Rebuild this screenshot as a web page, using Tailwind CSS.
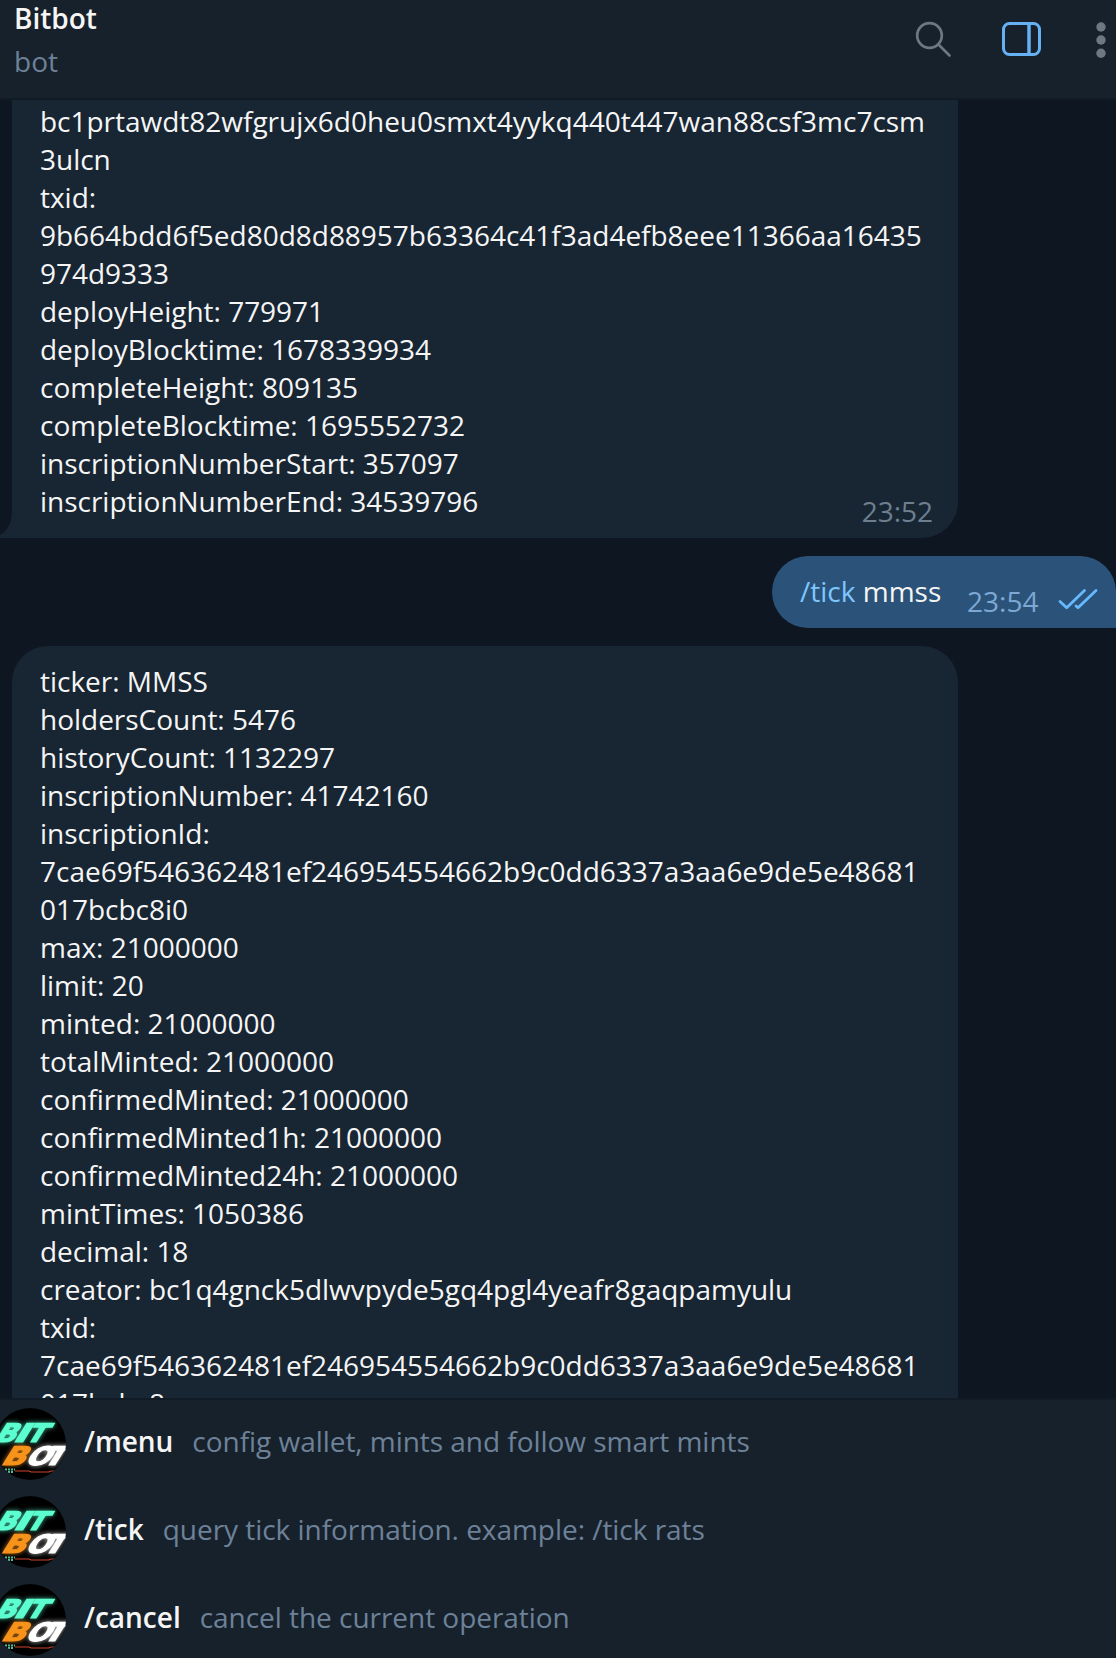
<!DOCTYPE html>
<html lang="en">
<head>
<meta charset="utf-8">
<title>Bitbot</title>
<script src="https://cdn.jsdelivr.net/npm/@tailwindcss/browser@4"></script>
</head>
<body class="h-[1658px] w-[1116px] overflow-hidden bg-[#0e1621] font-['Open_Sans',sans-serif] text-[28px] leading-[38px] text-[#f5f5f5]">
<svg class="hidden">
  <defs>
    <radialGradient id="ember" cx="0.55" cy="0.5" r="0.5"><stop offset="0" stop-color="#7a2412"/><stop offset="1" stop-color="#7a2412" stop-opacity="0"/></radialGradient>
    <filter id="glow" x="-30%" y="-50%" width="160%" height="200%"><feGaussianBlur stdDeviation="2.4" result="b"/><feComponentTransfer in="b" result="c"><feFuncA type="linear" slope="0.7"/></feComponentTransfer><feMerge><feMergeNode in="c"/><feMergeNode in="SourceGraphic"/></feMerge></filter>
  </defs>
  <symbol id="avatar" viewBox="0 0 72 72">
    <rect width="72" height="72" fill="#000"/>
    <ellipse cx="42" cy="64" rx="34" ry="12" fill="url(#ember)"/>
    <g font-family="DejaVu Sans, sans-serif" font-weight="700" font-size="25.500" stroke-width="1.200">
      <g filter="url(#glow)" fill="#5cffcf" stroke="#5cffcf">
        <text transform="translate(-1 34) skewX(-32)" textLength="21" lengthAdjust="spacingAndGlyphs">B</text>
        <text transform="translate(18 34) skewX(-32)" textLength="14" lengthAdjust="spacingAndGlyphs">I</text>
        <text transform="translate(30 34) skewX(-32)" textLength="19" lengthAdjust="spacingAndGlyphs">T</text>
      </g>
      <g filter="url(#glow)" fill="#fff" stroke="#fff">
        <text transform="translate(30 56.500) skewX(-32)" textLength="24" lengthAdjust="spacingAndGlyphs">O</text>
        <text transform="translate(48 56.500) skewX(-32)" textLength="20" lengthAdjust="spacingAndGlyphs">T</text>
      </g>
      <g filter="url(#glow)" fill="#f7931a" stroke="#f7931a">
        <text transform="translate(6 56.500) skewX(-32)" textLength="24" lengthAdjust="spacingAndGlyphs">B</text>
      </g>
    </g>
    <path d="M21 63h14l2 1h18l2-1h5" fill="none" stroke="#d0452b" stroke-width="1.2"/>
    <path d="M11 61.500h10M14 64h6" stroke="#4dbf9c" stroke-width="2" stroke-dasharray="2 1"/>
  </symbol>
</svg>
<div class="flex h-full flex-col">
  <header class="flex h-[100px] shrink-0 justify-between border-b-2 border-[#101b25] bg-[#17212b] pl-[14px]">
    <div>
      <h1 class="-mt-px font-semibold">Bitbot</h1>
      <p class="mt-[5px] text-[#6d8299]">bot</p>
    </div>
    <div class="flex pt-5">
      <svg class="mr-[50px] h-10 w-10" viewBox="0 0 40 40" fill="none" stroke="#6c7883" stroke-width="2.700" stroke-linecap="round"><circle cx="17.500" cy="15.500" r="12.300"/><path d="M26.500 24.500L37.500 35.500"/></svg>
      <svg class="mr-[50px] h-10 w-10" viewBox="0 0 40 40" fill="none" stroke="#65b1f4" stroke-width="3"><rect x="1.500" y="3.500" width="36" height="31" rx="6"/><path d="M27 4v30" stroke-width="3.500"/></svg>
      <svg class="h-10 w-6" viewBox="0 0 24 40" fill="#6c7883"><circle cx="9" cy="7" r="4.700"/><circle cx="9" cy="20" r="4.700"/><circle cx="9" cy="33.200" r="4.700"/></svg>
    </div>
  </header>
  <main class="flex min-h-0 flex-1 flex-col overflow-hidden">
    <div class="flex shrink-0 items-end">
      <svg class="h-9 w-3 shrink-0" viewBox="0 0 12 36"><path d="M12 8V36H0V33C8 29 12 20 12 8Z" fill="#182533"/></svg>
      <div class="relative w-[946px] rounded-br-[36px] bg-[#182533] px-7 pt-0.5 pb-[18px] tracking-[-0.015px] whitespace-nowrap">
        <p>bc1prtawdt82wfgrujx6d0heu0smxt4yykq440t447wan88csf3mc7csm</p>
        <p>3ulcn</p>
        <p>txid:</p>
        <p>9b664bdd6f5ed80d8d88957b63364c41f3ad4efb8eee11366aa16435</p>
        <p>974d9333</p>
        <p>deployHeight: 779971</p>
        <p>deployBlocktime: 1678339934</p>
        <p>completeHeight: 809135</p>
        <p>completeBlocktime: 1695552732</p>
        <p>inscriptionNumberStart: 357097</p>
        <p>inscriptionNumberEnd: 34539796</p>
        <time class="absolute right-[25px] bottom-2 text-[#6d7f8f]">23:52</time>
      </div>
    </div>
    <div class="mt-[18px] flex h-[72px] w-[344px] shrink-0 self-end rounded-l-[36px] rounded-tr-[36px] bg-[#2b5278] pl-7 whitespace-nowrap">
      <p class="w-[167px] pt-4"><span class="text-[#7ec6ff]">/tick</span> mmss</p>
      <time class="w-[91px] pt-[26px] text-[#7da8d3]">23:54</time>
      <svg class="mt-8 h-6 w-10" viewBox="0 0 40 24" fill="none" stroke="#65b9ff" stroke-width="2.800" stroke-linecap="round" stroke-linejoin="round"><path d="M2 13.500L8.700 19.800L26.500 2.500M18 18L20 19.800L38 2.500"/></svg>
    </div>
    <div class="mt-[18px] ml-3 w-[946px] shrink-0 rounded-t-[36px] bg-[#182533] px-7 pt-4 tracking-[-0.015px] whitespace-nowrap">
      <p>ticker: MMSS</p>
      <p>holdersCount: 5476</p>
      <p>historyCount: 1132297</p>
      <p>inscriptionNumber: 41742160</p>
      <p>inscriptionId:</p>
      <p>7cae69f546362481ef246954554662b9c0dd6337a3aa6e9de5e48681</p>
      <p>017bcbc8i0</p>
      <p>max: 21000000</p>
      <p>limit: 20</p>
      <p>minted: 21000000</p>
      <p>totalMinted: 21000000</p>
      <p>confirmedMinted: 21000000</p>
      <p>confirmedMinted1h: 21000000</p>
      <p>confirmedMinted24h: 21000000</p>
      <p>mintTimes: 1050386</p>
      <p>decimal: 18</p>
      <p>creator: bc1q4gnck5dlwvpyde5gq4pgl4yeafr8gaqpamyulu</p>
      <p>txid:</p>
      <p>7cae69f546362481ef246954554662b9c0dd6337a3aa6e9de5e48681</p>
      <p>017bcbc8</p>
    </div>
  </main>
  <section class="h-[260px] shrink-0 overflow-hidden border-t-2 border-[#101b25] bg-[#17212b] whitespace-nowrap">
    <div class="flex h-[88px] items-center">
      <svg class="-ml-1.5 h-[72px] w-[72px] shrink-0 rounded-full"><use href="#avatar"/></svg>
      <b class="mb-1.5 ml-[18px] font-semibold">/menu</b><span class="mb-1.5 ml-[19px] tracking-[-0.04px] text-[#6d8299]">config wallet, mints and follow smart mints</span>
    </div>
    <div class="flex h-[88px] items-center">
      <svg class="-ml-1.5 h-[72px] w-[72px] shrink-0 rounded-full"><use href="#avatar"/></svg>
      <b class="mb-1.5 ml-[18px] font-semibold">/tick</b><span class="mb-1.5 ml-[19px] tracking-[-0.04px] text-[#6d8299]">query tick information. example: /tick rats</span>
    </div>
    <div class="flex h-[88px] items-center">
      <svg class="-ml-1.5 h-[72px] w-[72px] shrink-0 rounded-full"><use href="#avatar"/></svg>
      <b class="mb-1.5 ml-[18px] font-semibold">/cancel</b><span class="mb-1.5 ml-[19px] tracking-[-0.04px] text-[#6d8299]">cancel the current operation</span>
    </div>
  </section>
</div>
</body>
</html>
